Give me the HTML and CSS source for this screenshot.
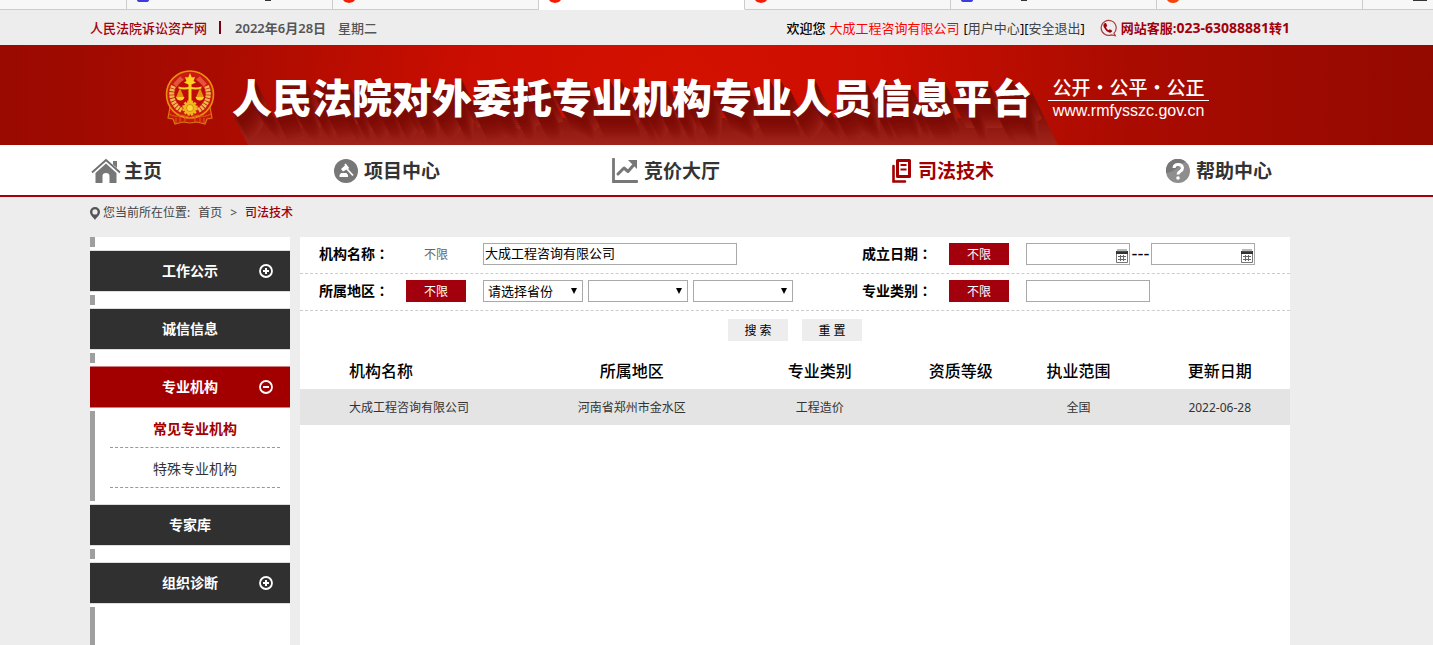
FILE: index.html
```html
<!DOCTYPE html>
<html lang="zh-CN">
<head>
<meta charset="utf-8">
<title>人民法院对外委托专业机构专业人员信息平台</title>
<link rel="stylesheet" href="styles.css">
</head>
<body>
<div class="tabs" aria-hidden="true">
  <span class="tab tab-first"></span>
  <span class="tab"><svg width="14" height="4" viewBox="0 0 14 4"><path d="M1 0h12q0 2-3 2H4Q1 2 1 0z" fill="#3b3be0"/></svg><i class="bit bit-right"></i></span>
  <span class="tab"><svg width="14" height="4" viewBox="0 0 14 4"><path d="M1 0h12l-2 2-4 1-4-1z" fill="#f51c05"/></svg></span>
  <span class="tab tab-active"><svg width="14" height="4" viewBox="0 0 14 4"><path d="M1 0h12l-2 2-4 1-4-1z" fill="#f51c05"/></svg></span>
  <span class="tab"><svg width="14" height="4" viewBox="0 0 14 4"><path d="M1 0h12l-2 2-4 1-4-1z" fill="#f51c05"/></svg></span>
  <span class="tab"><svg width="14" height="4" viewBox="0 0 14 4"><path d="M1 0h12q0 2-3 2H4Q1 2 1 0z" fill="#3b3be0"/></svg><i class="bit bit-near"></i></span>
  <span class="tab"><svg width="14" height="4" viewBox="0 0 14 4"><path d="M1 0h12q-2 3-6 3T1 0z" fill="#f5430b"/></svg></span>
  <span class="tab tab-last"><i class="bit bit-menu"></i></span>
</div>

<div class="topbar">
  <div class="wrap topbar-inner">
    <div class="topbar-left">
      <a class="site" href="#">人民法院诉讼资产网</a><span class="bar"></span><span class="date">2022年6月28日</span><span class="week">星期二</span>
    </div>
    <div class="topbar-right">
      <span class="welcome">欢迎您</span><span class="company">大成工程咨询有限公司</span>
      <span class="links">[<a href="#">用户中心</a>][<a href="#">安全退出</a>]</span>
      <span class="service">
        <svg width="18" height="18" viewBox="0 0 18 18"><path d="M15 14.2A7.5 7.5 0 1 0 12.4 15.900L16.300 16.600z" fill="none" stroke="#b03a3a" stroke-width="1.200"/><path d="M5.600 4.200c-1.500.9-1.600 2.500-.3 4.900 1.400 2.600 3.300 4.300 5.500 4.600 1.200.1 2.300-.8 2.500-1.900l-2.400-1.600-1.500 1c-1.200-.7-2.100-1.900-2.400-3.200l1.300-1-1.300-3z" fill="#a2000c"/></svg>
        <span>网站客服:<span class="phone">023-63088881</span>转<span class="phone">1</span></span>
      </span>
    </div>
  </div>
</div>

<header class="banner">
  <svg class="banner-shade" width="830" height="60" viewBox="0 0 830 60"><defs><linearGradient id="shade" x1="0" y1="0" x2="0" y2="1"><stop offset="0" stop-color="#7c0b05"/><stop offset=".5" stop-color="#88110a"/><stop offset="1" stop-color="#a0241b"/></linearGradient></defs><path d="M0 33L14 60H824L797 5V33z" fill="url(#shade)"/></svg>
  <svg class="emblem" width="50" height="56" viewBox="0 0 50 56">
    <path d="M5 37L3 48l5 1 2 5 8-2 7 1 7-1 8 2 2-5 5-1-2-11z" fill="#c9180f" stroke="#d9780c" stroke-width="1.200"/>
    <circle cx="25" cy="24.500" r="23.500" fill="#cc1a10" stroke="#e8900c" stroke-width="1.600"/>
    <path d="M8.500 16A18.500 18.500 0 0 0 17 40.500M41.500 16A18.500 18.500 0 0 1 33 40.500" fill="none" stroke="#efb84e" stroke-width="5" stroke-dasharray="2.400 .8"/>
    <path d="M10 15.500l7-7.500M40 15.500L33 8" stroke="#e2553a" stroke-width="5"/>
    <circle cx="25" cy="24" r="15" fill="#c00b0b"/>
    <g fill="#ffd21f">
      <path d="M25 3l1.800 4.500L30 7l-1.500 4 2.500 1.500-4.500 2V34h-3V14.500l-4.500-2 2.500-1.500L20 7l3.200.5z"/>
      <path d="M13.500 16.500q5.500 2 11.500 0 6 2 11.500 0v2q-5.500 2-11.500.3-6 1.700-11.500-.3z"/>
      <path d="M15 18l-4 9.500h8zM35 18l-4 9.500h8z" fill="#e3920f"/>
      <path d="M11 27h8.500q-1 3.500-4.200 3.500T11 27zM30.500 27H39q-1 3.500-4.200 3.500T30.500 27z"/>
    </g>
    <circle cx="25" cy="38" r="6.500" fill="#f3b51d" stroke="#f3b51d" stroke-width="2.600" stroke-dasharray="2.200 1.200"/>
    <circle cx="25" cy="38" r="3.500" fill="#ffd53a" stroke="#d58b0c"/>
    <path d="M4 44q7 4 13 1l8 2.500 8-2.500q6 3 13-1M11 48v5M15 47v5M20 47v5M30 47v5M35 47v5M39 48v5" fill="none" stroke="#da6a12" stroke-width=".9"/>
  </svg>
  <h1>人民法院对外委托专业机构专业人员信息平台</h1>
  <div class="motto"><p class="slogan">公开・公平・公正</p><p class="url">www.rmfysszc.gov.cn</p></div>
</header>

<nav class="nav">
  <div class="wrap nav-inner">
    <a href="#"><svg width="32" height="26" viewBox="0 0 32 26"><path d="M2 14.500L16 2l14 12.500" fill="none" stroke="#6e6e6e" stroke-width="1.800" stroke-linejoin="miter"/><path d="M23 3h4v7l-4-3.500z" fill="#777"/><path d="M16 5.500l10.500 9.500v10h-7v-7q0-3-3.500-3T12.500 18v7h-7V15z" fill="#777"/></svg>主页</a>
    <a href="#"><svg class="mid" width="24" height="24" viewBox="0 0 24 24"><circle cx="12" cy="12" r="12" fill="#777"/><path d="M5.500 18h8.500v-2l-1.500-2H7l-1.500 2zM7 10l5-4.500 2.500 4-5.500 3z" fill="#fff"/><path d="M13 10l6 6.500M11 5l3.500 4.500" stroke="#fff" stroke-width="1.800"/></svg>项目中心</a>
    <a href="#"><svg class="mid" width="26" height="26" viewBox="0 0 26 26"><path d="M1.500 1v22.500H25" fill="none" stroke="#777" stroke-width="2.800" stroke-linecap="round"/><path d="M6 16l6-6 4 3.500 7-8" fill="none" stroke="#777" stroke-width="3" stroke-linecap="round" stroke-linejoin="round"/><path d="M16 2h9v9z" fill="#777"/></svg>竞价大厅</a>
    <a class="current" href="#"><svg class="mid" width="20" height="26" viewBox="0 0 20 26"><path d="M5.500 2.500h12v16h-12z" fill="none" stroke="#a20000" stroke-width="3" stroke-linejoin="round"/><path d="M8.500 7h6M8.500 11.500h6" stroke="#a20000" stroke-width="2"/><path d="M1.500 8v15.500H13" fill="none" stroke="#a20000" stroke-width="2.600" stroke-linecap="round"/></svg>司法技术</a>
    <a href="#"><svg class="mid" width="24" height="24" viewBox="0 0 24 24"><circle cx="12" cy="12" r="12" fill="#8e8e8e"/><path d="M0 14q7-1 12-6 5-5 8-5a12 12 0 0 0-20 11z" fill="#777"/><path d="M8 9q.2-3.500 4.200-3.500T16.500 9q0 2-2.200 3.200T12 15.500" fill="none" stroke="#fff" stroke-width="3"/><circle cx="12" cy="19" r="1.800" fill="#fff"/></svg>帮助中心</a>
  </div>
</nav>

<div class="wrap crumbs">
  <svg width="10" height="13" viewBox="0 0 10 13"><path fill-rule="evenodd" d="M5 0a5 5 0 0 1 5 5c0 3-3.500 5.500-5 8C3.500 10.500 0 8 0 5a5 5 0 0 1 5-5zm0 2.300a2.600 2.600 0 1 0 0 5.200 2.600 2.600 0 0 0 0-5.200z" fill="#555"/></svg>
  <span>您当前所在位置:</span><a class="home" href="#">首页</a><span class="sep">&gt;</span><a class="here" href="#">司法技术</a>
</div>

<div class="wrap page">
  <aside class="side">
    <div class="tick"></div>
    <button class="group" type="button"><span>工作公示</span><svg width="14" height="14" viewBox="0 0 14 14"><circle cx="7" cy="7" r="6" fill="none" stroke="#fff" stroke-width="1.800"/><path d="M4 7h6M7 4v6" stroke="#fff" stroke-width="2"/></svg></button>
    <div class="tick"></div>
    <button class="group" type="button"><span>诚信信息</span></button>
    <div class="tick"></div>
    <button class="group open" type="button"><span>专业机构</span><svg width="14" height="14" viewBox="0 0 14 14"><circle cx="7" cy="7" r="6" fill="none" stroke="#fff" stroke-width="1.800"/><path d="M4 7h6" stroke="#fff" stroke-width="2"/></svg></button>
    <div class="tick submenu"><a class="on" href="#">常见专业机构</a><a href="#">特殊专业机构</a></div>
    <button class="group" type="button"><span>专家库</span></button>
    <div class="tick"></div>
    <button class="group" type="button"><span>组织诊断</span><svg width="14" height="14" viewBox="0 0 14 14"><circle cx="7" cy="7" r="6" fill="none" stroke="#fff" stroke-width="1.800"/><path d="M4 7h6M7 4v6" stroke="#fff" stroke-width="2"/></svg></button>
    <div class="tick rest"></div>
  </aside>

  <main class="content">
    <form>
      <div class="row">
        <label for="org">机构名称<span class="colon" lang="zh-TW">：</span></label>
        <button class="any off" type="button">不限</button>
        <div class="fields"><input class="name" id="org" type="text" value="大成工程咨询有限公司"></div>
        <label for="from">成立日期<span class="colon" lang="zh-TW">：</span></label>
        <button class="any" type="button">不限</button>
        <div class="fields">
          <span class="datebox"><input id="from" type="text"><svg width="12" height="14" viewBox="0 0 12 14"><path d="M.5 3v10.500h11V3z" fill="#fff" stroke="#777"/><path d="M0 2h12v3H0z" fill="#333"/><path d="M2 0v3M4 0v3M6 0v3M8 0v3M10 0v3" stroke="#777"/><path d="M2 7.500h8M2 10.500h8M4.500 6v6M7.500 6v6" stroke="#666"/></svg></span><span class="dash">---</span><span class="datebox"><input type="text" aria-label="截止日期"><svg width="12" height="14" viewBox="0 0 12 14"><path d="M.5 3v10.500h11V3z" fill="#fff" stroke="#777"/><path d="M0 2h12v3H0z" fill="#333"/><path d="M2 0v3M4 0v3M6 0v3M8 0v3M10 0v3" stroke="#777"/><path d="M2 7.500h8M2 10.500h8M4.500 6v6M7.500 6v6" stroke="#666"/></svg></span>
        </div>
      </div>
      <div class="row">
        <label for="prov">所属地区<span class="colon" lang="zh-TW">：</span></label>
        <button class="any" type="button">不限</button>
        <div class="fields selects">
          <span class="pick"><select id="prov"><option>请选择省份</option></select></span>
          <span class="pick"><select aria-label="城市"><option></option></select></span>
          <span class="pick"><select aria-label="区县"><option></option></select></span>
        </div>
        <label for="kind">专业类别<span class="colon" lang="zh-TW">：</span></label>
        <button class="any" type="button">不限</button>
        <div class="fields"><input class="kind" id="kind" type="text"></div>
      </div>
      <div class="actions"><button type="submit">搜 索</button><button type="reset">重 置</button></div>
    </form>
    <table>
      <thead><tr><th class="c1">机构名称</th><th class="c2">所属地区</th><th class="c2">专业类别</th><th class="c4">资质等级</th><th class="c5">执业范围</th><th class="c6">更新日期</th></tr></thead>
      <tbody><tr><td class="c1">大成工程咨询有限公司</td><td>河南省郑州市金水区</td><td>工程造价</td><td></td><td>全国</td><td>2022-06-28</td></tr></tbody>
    </table>
  </main>
</div>
</body>
</html>
```
FILE: styles.css
```css
* { box-sizing: border-box; }
html, body { height: 100%; }
body {
  margin: 0;
  display: flex;
  flex-direction: column;
  background: #ededed;
  color: #000;
  font: 13px/20px "Noto Sans", "Noto Sans CJK SC", sans-serif;
}
a { color: inherit; text-decoration: none; }
button, input, select { font-family: inherit; color: inherit; margin: 0; }
svg { display: block; flex: none; }
.wrap { margin: 0 143px 0 90px; }

/* tab strip */
.tabs { display: flex; height: 10px; flex: none; overflow: hidden; background: #f7f7f7; }
.tab { display: flex; flex: 0 0 206px; position: relative; padding-left: 9px; border-right: 1px solid #ccc; border-bottom: 1px solid #ccc; }
.tab-first { flex-basis: 127px; }
.tab-active { background: #fff; border-bottom-color: #fff; }
.tab-last { flex: 1; border-right: 0; }
.bit { position: absolute; top: 0; width: 6px; height: 1px; background: #333; }
.bit-right { left: 138px; }
.bit-near { left: 70px; }
.bit-menu { right: 6px; width: 14px; }

/* top bar */
.topbar { flex: none; height: 35px; }
.topbar-inner, .topbar-left, .topbar-right, .service { display: flex; align-items: center; white-space: nowrap; }
.topbar-inner { justify-content: space-between; height: 35px; }
.site { color: #a2000c; font-weight: 500; }
.bar { width: 2px; height: 13px; margin: 0 14px 0 12px; background: #7a0010; }
.date { color: #555; font-weight: 600; font-size: 13px; }
.week { margin-left: 12px; color: #555; font-weight: 500; }
.welcome { font-weight: 500; margin-right: 4px; }
.company { color: #f00; margin-right: 4px; }
.links { color: #001; }
.links a { color: #444; }
.service { margin-left: 14px; gap: 4px; color: #a2000c; font-weight: 700; }
.phone { font-size: 14px; }

/* banner */
.banner {
  position: relative;
  flex: none;
  display: flex;
  align-items: flex-start;
  height: 100px;
  padding: 25px 0 0 165px;
  overflow: hidden;
  color: #fff;
  background: radial-gradient(ellipse 760px 760px at 675px 50px, #d31100, #cc0e00 25%, #aa0b00 60%, #930900);
}
.banner-shade { position: absolute; left: 234px; top: 40px; }
.emblem, .banner h1, .motto { position: relative; }
.banner h1 {
  margin: 1px 16px 0 17px;
  font-family: "Noto Sans CJK SC", sans-serif;
  font-size: 40px;
  line-height: 50px;
  font-weight: 900;
  white-space: nowrap;
  text-shadow: 1px 2px #7c0b05, 2px 4px #7c0b05, 3px 6px #7c0b05, 4px 8px #7f0c06, 5px 10px #820e07, 6px 12px #850f08, 7px 14px #88110a, 8px 16px #8b130c, 9px 18px #8f160e, 10px 20px #931911, 11px 22px #971d14, 12px 24px #9b2017;
}
.motto { width: 161px; margin-top: 6px; text-align: center; white-space: nowrap; }
.motto p { margin: 0; }
.slogan { height: 25px; border-bottom: 1px solid #fff; font: 500 19px/22px "Noto Sans CJK SC", sans-serif; }
.url { font: 16px/20px "Liberation Sans", sans-serif; }

/* navigation */
.nav { flex: none; background: #fff; border-bottom: 2px solid #a2000c; }
.nav-inner { display: flex; justify-content: space-between; padding-right: 18px; }
.nav a { display: flex; align-items: center; gap: 2px; height: 50px; padding-top: 2px; color: #333; font-size: 19px; font-weight: 700; }
.nav .mid { margin-right: 4px; }
.nav a.current { color: #a20000; }

/* breadcrumb */
.crumbs { display: flex; flex: none; align-items: center; height: 32px; margin-bottom: 8px; font-size: 12px; color: #444; }
.crumbs span:first-of-type { margin-left: 3px; }
.home { margin-left: 8px; }
.sep { margin: 0 8px; }
.here { color: #a2000c; font-weight: 500; }

/* page body */
.page { display: flex; gap: 10px; flex: 1; min-height: 0; overflow: hidden; }
.side { flex: 0 0 200px; display: flex; flex-direction: column; background: #fff; }
.tick { flex: none; min-height: 10px; margin-bottom: 3px; border-left: 5px solid #9f9f9f; }
.group {
  flex: none;
  display: grid;
  grid-template-columns: 48px 1fr 48px;
  align-items: center;
  justify-items: center;
  height: 42px;
  margin-bottom: 3px;
  padding: 0;
  border: 0;
  border-top: 1px solid #ddd;
  border-bottom: 1px solid #ddd;
  background: #303030;
  color: #fff;
  font-size: 14px;
  line-height: 20px;
  font-weight: 700;
}
.group span { grid-column: 2; }
.group.open { background: #a20000; border-color: #d08080; }
.submenu { height: 90px; padding: 0 10px 0 15px; }
.submenu a { display: block; margin-bottom: 3px; border-bottom: 1px dashed #999; color: #333; font-size: 14px; line-height: 36px; text-align: center; }
.submenu a.on { color: #a20000; font-weight: 700; }
.rest { flex: 1; margin-bottom: 0; }

.content { flex: 1; min-width: 0; background: #fff; }
.row {
  display: grid;
  grid-template-columns: 87px 60px 1fr 87px 60px 281px;
  align-items: center;
  height: 37px;
  padding: 0 0 2px 19px;
  border-bottom: 1px dashed #ccc;
}
.row label { font-size: 14px; font-weight: 700; }
.colon { font-family: "Noto Sans CJK TC", sans-serif; line-height: 1; }
.any { height: 22px; padding: 2px 0 0; border: 0; background: #a2000c; color: #fff; font-size: 12px; line-height: 20px; }
.any.off { background: none; color: #666; }
.fields { display: flex; align-items: center; padding-left: 17px; }
input, select { height: 22px; padding: 0 1px; border: 1px solid #a9a9a9; border-radius: 0; background: #fff; font-size: 13px; line-height: 18px; }
.name { width: 254px; padding-bottom: 3px; }
.kind { width: 124px; }
.datebox, .pick { position: relative; display: block; }
.datebox input { display: block; width: 104px; }
.datebox svg { position: absolute; right: 2px; top: 6px; }
.dash { width: 21px; text-align: center; font: 18px/20px "Liberation Sans", sans-serif; }
.selects { gap: 5px; }
.pick select { display: block; width: 100px; padding-left: 4px; appearance: none; }
.pick::after { content: ""; position: absolute; right: 6px; top: 8px; border: solid transparent; border-width: 6px 3px 0; border-top-color: #000; pointer-events: none; }
.actions { display: flex; justify-content: center; gap: 14px; padding: 8px 0 12px; }
.actions button { width: 60px; height: 22px; padding: 2px 0 0; border: 0; background: #ededed; font-size: 12px; line-height: 20px; }

table { width: 100%; table-layout: fixed; border-collapse: collapse; }
th, td { height: 36px; padding: 0; text-align: center; }
th { font-size: 16px; font-weight: 500; }
td { padding-top: 2px; background: #e4e4e4; color: #333; font-size: 12px; }
th.c1, td.c1 { width: 24%; padding-left: 49px; text-align: left; }
.c2 { width: 19%; }
.c4 { width: 9.5%; }
.c5 { width: 14.3%; }
.c6 { width: 14.2%; }
```
